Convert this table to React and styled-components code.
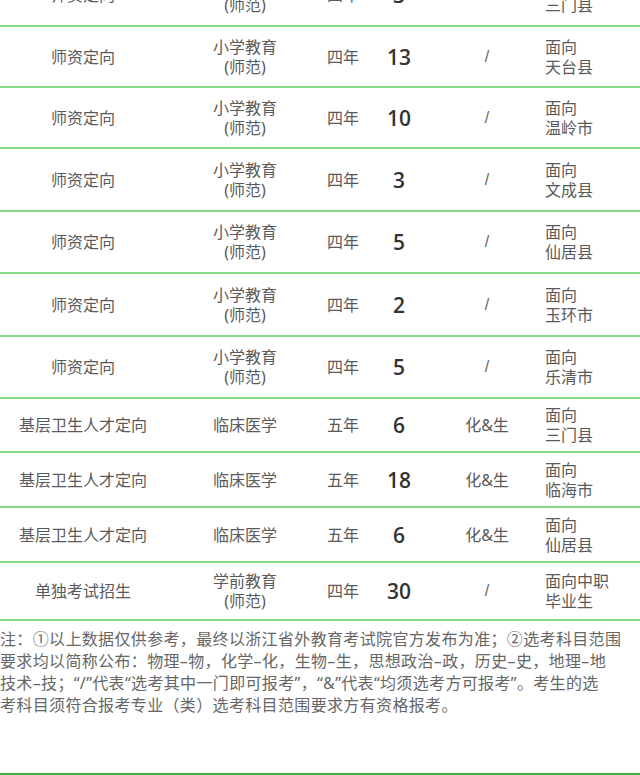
import React from 'react'
import styled, { createGlobalStyle } from 'styled-components'

const GlobalStyle = createGlobalStyle`
  html, body {
    margin: 0;
    padding: 0;
    background: #ffffff;
  }
  body {
    font-family: "Noto Sans", "Noto Sans CJK SC", sans-serif;
    overflow: hidden;
  }
`

const Page = styled.div`
  width: 640px;
  height: 775px;
  overflow: hidden;
  background: #fff;
`

const Table = styled.div`
  margin-top: -35px;
`

const Row = styled.div`
  display: grid;
  grid-template-columns: 166px 158px 38px 72px 106px 1fr;
  align-items: center;
  height: ${p => p.h}px;
  box-sizing: border-box;
  border-bottom: 2px solid #86d986;
`

const Cell = styled.div`
  font-size: 16px;
  line-height: 20px;
  color: #5a5a5a;
  text-align: ${p => (p.left ? 'left' : 'center')};
  padding-left: ${p => (p.left ? '5px' : '0')};
  white-space: nowrap;
`

const Num = styled(Cell)`
  font-family: "Open Sans", "Lato", sans-serif;
  font-weight: 600;
  font-size: 21px;
  color: #333;
  padding-left: 2px;
`

const Slash = styled(Cell)`
  font-family: "Liberation Sans", sans-serif;
  color: #666;
  font-size: 16px;
`

const Note = styled.p`
  margin: 0;
  padding: 7px 14px 0 0;
  height: 154px;
  box-sizing: border-box;
  font-size: 16px;
  line-height: 22px;
  letter-spacing: 0.35px;
  color: #666;
  border-bottom: 2px solid #35b935;
`

const edu = ['小学教育', '(师范)']

const rows = [
  { type: '师资定向', major: edu, years: '四年', num: '3', subj: '/', area: ['面向', '三门县'], h: 62 },
  { type: '师资定向', major: edu, years: '四年', num: '13', subj: '/', area: ['面向', '天台县'], h: 61 },
  { type: '师资定向', major: edu, years: '四年', num: '10', subj: '/', area: ['面向', '温岭市'], h: 61 },
  { type: '师资定向', major: edu, years: '四年', num: '3', subj: '/', area: ['面向', '文成县'], h: 63 },
  { type: '师资定向', major: edu, years: '四年', num: '5', subj: '/', area: ['面向', '仙居县'], h: 62 },
  { type: '师资定向', major: edu, years: '四年', num: '2', subj: '/', area: ['面向', '玉环市'], h: 63 },
  { type: '师资定向', major: edu, years: '四年', num: '5', subj: '/', area: ['面向', '乐清市'], h: 62 },
  { type: '基层卫生人才定向', major: ['临床医学'], years: '五年', num: '6', subj: '化&生', area: ['面向', '三门县'], h: 54 },
  { type: '基层卫生人才定向', major: ['临床医学'], years: '五年', num: '18', subj: '化&生', area: ['面向', '临海市'], h: 55 },
  { type: '基层卫生人才定向', major: ['临床医学'], years: '五年', num: '6', subj: '化&生', area: ['面向', '仙居县'], h: 55 },
  { type: '单独考试招生', major: ['学前教育', '(师范)'], years: '四年', num: '30', subj: '/', area: ['面向中职', '毕业生'], h: 58 },
]

const Lines = ({ items }) => items.map((t, i) => <div key={i}>{t}</div>)

export default function App() {
  return (
    <Page>
      <GlobalStyle />
      <Table>
        {rows.map((r, i) => (
          <Row key={i} h={r.h}>
            <Cell>{r.type}</Cell>
            <Cell><Lines items={r.major} /></Cell>
            <Cell>{r.years}</Cell>
            <Num>{r.num}</Num>
            {r.subj === '/' ? <Slash>/</Slash> : <Cell>{r.subj}</Cell>}
            <Cell left><Lines items={r.area} /></Cell>
          </Row>
        ))}
      </Table>
      <Note>
        注：①以上数据仅供参考，最终以浙江省外教育考试院官方发布为准；②选考科目范围要求均以简称公布：物理–物，化学–化，生物–生，思想政治–政，历史–史，地理–地<br />技术–技；“/”代表“选考其中一门即可报考”，“&”代表“均须选考方可报考”。考生的选<br />考科目须符合报考专业（类）选考科目范围要求方有资格报考。
      </Note>
    </Page>
  )
}
